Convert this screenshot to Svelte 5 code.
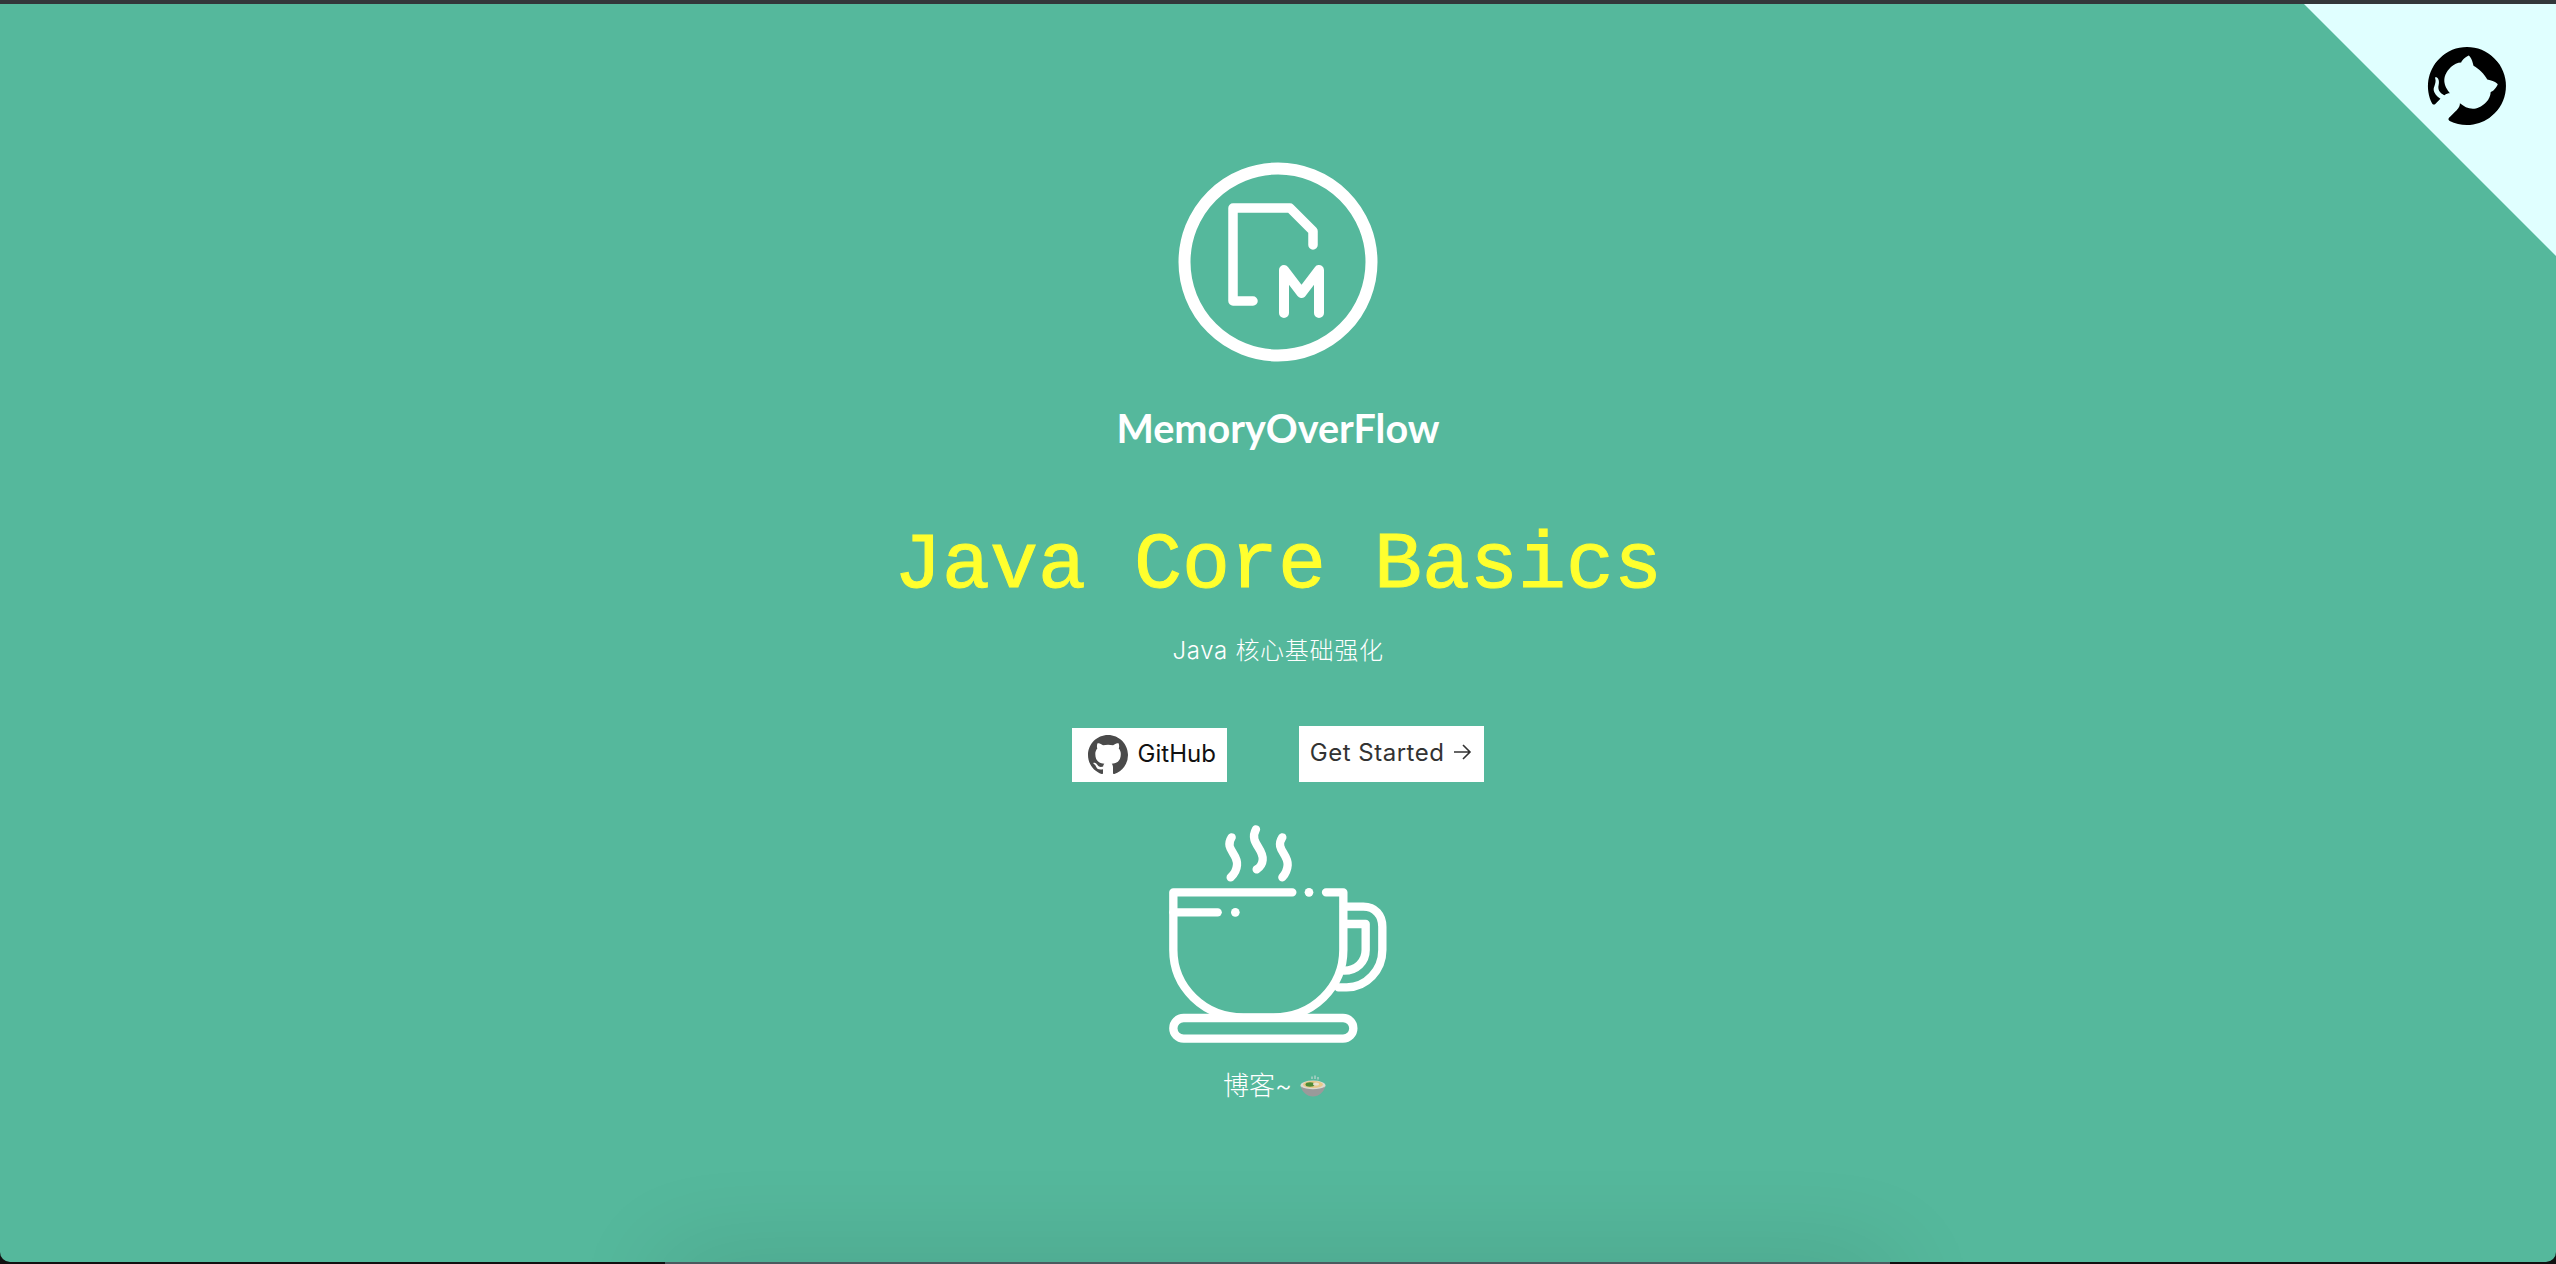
<script>
    const markPath = "M8 0C3.58 0 0 3.58 0 8c0 3.54 2.29 6.53 5.47 7.59.4.07.55-.17.55-.38 0-.19-.01-.82-.01-1.49-2.01.37-2.53-.49-2.69-.94-.09-.23-.48-.94-.82-1.13-.28-.15-.68-.52-.01-.53.63-.01 1.08.58 1.23.82.72 1.21 1.87.87 2.33.66.07-.52.28-.87.51-1.07-1.78-.2-3.64-.89-3.64-3.95 0-.87.31-1.59.82-2.15-.08-.2-.36-1.02.08-2.12 0 0 .67-.21 2.2.82.64-.18 1.32-.27 2-.27.68 0 1.36.09 2 .27 1.53-1.04 2.2-.82 2.2-.82.44 1.1.16 1.92.08 2.12.51.56.82 1.27.82 2.15 0 3.07-1.87 3.75-3.65 3.95.29.25.54.73.54 1.48 0 1.07-.01 1.93-.01 2.2 0 .21.15.46.55.38A8.013 8.013 0 0016 8c0-4.42-3.58-8-8-8z";
</script>

<div class="cover">
    <div class="hero">
        <a class="corner" href="#top" aria-label="GitHub">
            <svg class="corner-mark" viewBox="0 0 16 16"><path d={markPath} /></svg>
        </a>

        <main class="content">
            <svg class="logo" viewBox="0 0 220 220" fill="none" stroke="#fff" stroke-linecap="round" stroke-linejoin="round">
                <circle cx="110" cy="110" r="93.5" stroke-width="12" />
                <path d="M85 149H65V56H122L145 79V93" stroke-width="9.5" />
                <path d="M116 161V118L133.5 141L151 118V161" stroke-width="10" />
            </svg>

            <div class="brand">MemoryOverFlow</div>
            <h1>Java Core Basics</h1>
            <p class="sub">Java 核心基础强化</p>

            <div class="buttons">
                <a class="btn btn-github" href="#top">
                    <svg viewBox="0 0 16 16"><path d={markPath} /></svg>
                    <span>GitHub</span>
                </a>
                <a class="btn btn-start" href="#top">
                    <span>Get Started</span>
                    <svg viewBox="0 0 20 20" fill="none" stroke="#333" stroke-width="1.6"><path d="M2 10H18M11 3L18 10L11 17" /></svg>
                </a>
            </div>

            <svg class="cup" viewBox="9 0 810 900" fill="none" stroke="#fff" stroke-width="25" stroke-linecap="round" stroke-linejoin="round">
                <path d="M275 82C252 118 295 130 291 165C290 180 283 192 272 202" />
                <path d="M348 58C326 98 372 115 368 150C367 162 360 172 350 178" />
                <path d="M427 82C404 118 445 130 443 165C442 180 436 192 427 202" />
                <path d="M457 247H100V420C100 530 190 622 310 622H400C520 622 610 530 610 420V247H558" />
                <circle cx="507" cy="247" r="13" fill="#fff" stroke="none" />
                <path d="M100 307H233" />
                <circle cx="286" cy="307" r="13" fill="#fff" stroke="none" />
                <rect x="100" y="624" width="540" height="62" rx="31" />
                <path d="M612 290H670C705 290 727 315 727 350V420C727 480 680 532 620 532H595" />
                <path d="M612 342H677V420C677 455 650 482 612 482" />
            </svg>

            <p class="blog">
                <span>博客~</span>
                <svg class="bowl" viewBox="0 0 26 22">
                    <path d="M12 1.5V4M15 0.5V4M18 2V4.5" stroke="#d8dedb" stroke-width="1" fill="none" />
                    <ellipse cx="13" cy="10.5" rx="12.5" ry="5" fill="#dedad0" />
                    <ellipse cx="13" cy="9.5" rx="10" ry="3.6" fill="#e8c98a" />
                    <ellipse cx="10" cy="9.5" rx="4.5" ry="2.2" fill="#4f8a35" />
                    <ellipse cx="16" cy="9" rx="3" ry="1.6" fill="#e8e2cf" />
                    <path d="M1 11.5C2 17 7 21.5 13 21.5C19 21.5 24 17 25 11.5C20 15 6 15 1 11.5Z" fill="#9a9a9a" />
                </svg>
            </p>
        </main>
    </div>

    <div class="next"></div>
</div>

<style>
    :global(body) {
        margin: 0;
    }

    .cover {
        position: relative;
        height: 1264px;
        box-sizing: border-box;
        border-top: 4px solid #33373a;
        background: #111;
        overflow: hidden;
        font-family: Inter, "Noto Sans CJK SC", sans-serif;
        color: #fff;
    }

    .hero {
        position: relative;
        height: 1258px;
        background: #55b89c;
        border-radius: 0 0 10px 10px;
        overflow: hidden;
    }

    .corner {
        position: absolute;
        top: 0;
        right: 0;
        width: 252px;
        height: 252px;
        background: #e0ffff;
        clip-path: polygon(0 0, 100% 0, 100% 100%);
    }

    .corner-mark {
        position: absolute;
        top: 43px;
        left: 124px;
        width: 78px;
        height: 78px;
        transform: rotate(45deg);
    }

    .content {
        display: flex;
        flex-direction: column;
        align-items: center;
        padding-top: 148px;
    }

    .logo {
        display: block;
        width: 220px;
        height: 220px;
    }

    .brand {
        margin-top: 33px;
        font-family: Lato, sans-serif;
        font-size: 39.6px;
        font-weight: 700;
        line-height: 46px;
    }

    h1 {
        margin: 70px 0 0;
        font-family: "Liberation Mono", monospace;
        font-size: 80px;
        font-weight: 400;
        line-height: 90px;
        color: #ffff2e;
        -webkit-text-stroke: 1px #ffff2e;
    }

    .sub {
        margin: 24px 0 0;
        font-size: 24px;
        font-weight: 300;
        letter-spacing: 0.7px;
        line-height: 32px;
    }

    .buttons {
        display: flex;
        align-items: flex-end;
        gap: 72px;
        margin-top: 59px;
    }

    .btn {
        display: flex;
        align-items: center;
        background: #fff;
        font-size: 24px;
        text-decoration: none;
    }

    .btn span {
        padding-bottom: 4px;
    }

    .btn-github {
        gap: 10px;
        height: 54px;
        padding: 0 11px 0 16px;
        color: #111;
    }

    .btn-github svg {
        width: 40px;
        height: 40px;
        fill: #4a4a4a;
    }

    .btn-start {
        gap: 8px;
        height: 56px;
        padding: 0 12px 0 11px;
        color: #333;
        letter-spacing: 0.5px;
    }

    .btn-start svg {
        width: 20px;
        height: 20px;
        margin-bottom: 4px;
    }

    .cup {
        display: block;
        width: 270px;
        height: 300px;
        margin-top: 28px;
    }

    .blog {
        display: flex;
        align-items: center;
        gap: 8px;
        margin: -40px 0 0;
        padding-right: 7px;
        font-size: 26px;
        font-weight: 300;
        line-height: 32px;
    }

    .bowl {
        width: 26px;
        height: 22px;
    }

    .next {
        position: absolute;
        left: 665px;
        bottom: -60px;
        width: 1225px;
        height: 62px;
        background: #4b5a5f;
        box-shadow: 0 0 100px rgba(0, 0, 0, 0.14);
    }
</style>
